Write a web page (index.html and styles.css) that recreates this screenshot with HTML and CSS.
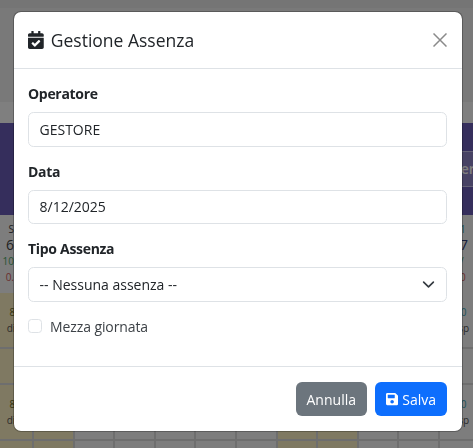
FILE: index.html
```html
<!DOCTYPE html>
<html lang="en">
<head>
    <meta charset="UTF-8">
    <meta name="viewport" content="width=device-width, initial-scale=1.0">
    <title>Gestione Assenza</title>
    <link rel="stylesheet" href="styles.css">
</head>
<body>
    <div class="page">
        <div class="top-bar"></div>
        <div class="top-strip"></div>
        <div class="band">
            <div class="band-tab">Inter</div>
        </div>
        <div class="calendar">
            <div class="cell summary"><span class="s-name">S</span><span class="s-num">6</span><span class="s-ok">10</span><span class="s-ko">0.</span></div>
            <div class="cell summary"></div><div class="cell summary"></div><div class="cell summary"></div>
            <div class="cell summary"></div><div class="cell summary"></div><div class="cell summary"></div>
            <div class="cell summary"></div><div class="cell summary"></div><div class="cell summary"></div>
            <div class="cell summary"></div>
            <div class="cell summary last"><span class="s-name teal">1</span><span class="s-num navy">7</span><span class="s-ok">/</span><span class="s-ko">0</span></div>

            <div class="cell day tan first"><span class="hours olive">8.0</span>disp</div><div class="cell day tan"></div><div class="cell day"></div><div class="cell day"></div>
            <div class="cell day"></div><div class="cell day"></div><div class="cell day"></div>
            <div class="cell day tan"></div><div class="cell day tan"></div><div class="cell day"></div>
            <div class="cell day"></div><div class="cell day final"><span class="hours teal">8.0</span>disp</div>

            <div class="cell gap tan"></div><div class="cell gap tan"></div><div class="cell gap"></div><div class="cell gap"></div>
            <div class="cell gap"></div><div class="cell gap"></div><div class="cell gap"></div>
            <div class="cell gap tan"></div><div class="cell gap tan"></div><div class="cell gap"></div>
            <div class="cell gap"></div><div class="cell gap"></div>

            <div class="cell day tan first"><span class="hours olive">8.0</span>disp</div><div class="cell day tan"></div><div class="cell day"></div><div class="cell day"></div>
            <div class="cell day"></div><div class="cell day"></div><div class="cell day"></div>
            <div class="cell day tan"></div><div class="cell day tan"></div><div class="cell day"></div>
            <div class="cell day"></div><div class="cell day final"><span class="hours teal">8.0</span>disp</div>

            <div class="cell gap tan"></div><div class="cell gap tan"></div><div class="cell gap"></div><div class="cell gap"></div>
            <div class="cell gap"></div><div class="cell gap"></div><div class="cell gap"></div>
            <div class="cell gap tan"></div><div class="cell gap tan"></div><div class="cell gap"></div>
            <div class="cell gap"></div><div class="cell gap"></div>
        </div>
    </div>

    <div class="backdrop">
        <div class="modal">
            <header class="modal-header">
                <h5 class="modal-title">
                    <svg class="title-icon" viewBox="0 0 448 512"><path fill="currentColor" d="M436 160H12c-6.627 0-12-5.373-12-12v-36c0-26.51 21.49-48 48-48h48V12c0-6.627 5.373-12 12-12h40c6.627 0 12 5.373 12 12v52h128V12c0-6.627 5.373-12 12-12h40c6.627 0 12 5.373 12 12v52h48c26.51 0 48 21.49 48 48v36c0 6.627-5.373 12-12 12zM12 192h424c6.627 0 12 5.373 12 12v260c0 26.51-21.49 48-48 48H48c-26.51 0-48-21.49-48-48V204c0-6.627 5.373-12 12-12zm333.296 95.947l-28.169-28.398c-4.667-4.705-12.265-4.736-16.97-.068L194.12 364.665l-45.98-46.352c-4.667-4.705-12.266-4.736-16.971-.068l-28.397 28.17c-4.705 4.667-4.736 12.265-.068 16.97l82.601 83.269c4.667 4.705 12.265 4.736 16.97.068l142.953-141.805c4.705-4.667 4.736-12.265.068-16.97z"/></svg>
                    Gestione Assenza
                </h5>
                <button class="btn-close" type="button" aria-label="Chiudi">
                    <svg viewBox="0 0 14 14"><path d="M.5.5l13 13M13.5.5l-13 13" stroke="currentColor" stroke-width="1.5" fill="none"/></svg>
                </button>
            </header>

            <div class="modal-body">
                <div class="form-group">
                    <label class="form-label">Operatore</label>
                    <input class="form-control" type="text" value="GESTORE">
                </div>
                <div class="form-group">
                    <label class="form-label">Data</label>
                    <input class="form-control" type="text" value="8/12/2025">
                </div>
                <div class="form-group">
                    <label class="form-label">Tipo Assenza</label>
                    <div class="select-wrap">
                        <select class="form-control">
                            <option>-- Nessuna assenza --</option>
                        </select>
                        <svg class="chevron" viewBox="0 0 16 16"><path d="M2 5l6 6 6-6" stroke="#343a40" stroke-width="2" stroke-linecap="round" stroke-linejoin="round" fill="none"/></svg>
                    </div>
                </div>
                <label class="form-check">
                    <input class="check-input" type="checkbox">
                    Mezza giornata
                </label>
            </div>

            <footer class="modal-footer">
                <button class="btn btn-secondary" type="button">Annulla</button>
                <button class="btn btn-primary" type="button">
                    <svg class="btn-icon" viewBox="0 0 448 512"><path fill="currentColor" d="M433.941 129.941l-83.882-83.882A48 48 0 0 0 316.118 32H48C21.49 32 0 53.49 0 80v352c0 26.51 21.49 48 48 48h352c26.51 0 48-21.49 48-48V163.882a48 48 0 0 0-14.059-33.941zM224 416c-35.346 0-64-28.654-64-64 0-35.346 28.654-64 64-64s64 28.654 64 64c0 35.346-28.654 64-64 64zm96-304.52V212c0 6.627-5.373 12-12 12H76c-6.627 0-12-5.373-12-12V108c0-6.627 5.373-12 12-12h228.52c3.183 0 6.235 1.264 8.485 3.515l3.48 3.48A11.996 11.996 0 0 1 320 111.48z"/></svg>
                    Salva
                </button>
            </footer>
        </div>
    </div>
</body>
</html>
```

FILE: styles.css
```css
:root {
    --text: #212529;
    --border: #dee2e6;
    --primary: #0d6efd;
    --secondary: #6c757d;
}

* {
    margin: 0;
    padding: 0;
    box-sizing: border-box;
}

html, body {
    height: 100%;
    overflow: hidden;
}

body {
    font-family: "Open Sans", "Noto Sans", Arial, sans-serif;
    font-size: 14px;
    line-height: 1.5;
    color: var(--text);
    background: #dcdcdc;
}

/* Page behind the dialog */
.page {
    height: 448px;
    overflow: hidden;
}

.top-bar {
    height: 8px;
    background: #eaeaea;
}

.top-strip {
    height: 115px;
    background: linear-gradient(#f2f2f2 0 94px, #ffffff 94px);
}

.band {
    display: flex;
    justify-content: flex-end;
    height: 92px;
    padding-top: 28px;
    background: #6a5cb8;
}

.band-tab {
    width: 33px;
    height: 36px;
    padding: 6px 0 0 2px;
    overflow: hidden;
    font-weight: 600;
    color: #ffffff;
    background: #8f84c8;
    border-top: 1px solid #c9c2ec;
    border-bottom: 1px solid #c9c2ec;
}

.calendar {
    display: grid;
    grid-template-columns: 32px repeat(10, 38.6px) 1fr;
    column-gap: 2px;
    background: #dcdcdc;
}

.cell {
    background: #fafafa;
    font-size: 10px;
    font-weight: 500;
    text-align: center;
    overflow: hidden;
}

.cell.tan {
    background: #fff3c4;
}

.summary {
    height: 78px;
    display: flex;
    flex-direction: column;
    align-items: flex-end;
    padding: 6px 18px 0 0;
    line-height: 16px;
}

.summary.last {
    align-items: flex-start;
    padding: 6px 0 0 20px;
}

.s-name { color: #444444; }
.s-num { color: #444444; font-size: 14px; }
.s-ok { color: #4ba866; }
.s-ko { color: #d45a5a; }
.teal { color: #3fa5b2; }
.navy { color: #2f3b78; }
.olive { color: #6a6a20; }

.day {
    height: 54px;
    padding-top: 12px;
    line-height: 15px;
    color: #555555;
}

.day.first {
    padding-left: 1px;
}

.day.final {
    padding-left: 6px;
}

.hours {
    display: block;
    height: 16px;
}

.gap {
    height: 34px;
    margin: 2px 0;
}

/* Dialog */
.backdrop {
    position: fixed;
    inset: 0;
    background: rgba(0, 0, 0, 0.5);
    padding: 11px 10px 0 13px;
}

.modal {
    background: #ffffff;
    border: 1px solid rgba(0, 0, 0, 0.25);
    border-radius: 8px;
    height: 421px;
    background-clip: padding-box;
}

.modal-header {
    display: flex;
    align-items: center;
    justify-content: space-between;
    height: 57px;
    padding: 0 15px 0 14px;
    border-bottom: 1px solid var(--border);
}

.modal-title {
    display: flex;
    align-items: center;
    gap: 7px;
    font-size: 17.5px;
    font-weight: 500;
    line-height: 1.5;
}

.title-icon {
    width: 15.75px;
    height: 18px;
}

.btn-close {
    width: 14px;
    height: 14px;
    border: none;
    background: none;
    color: #8a8a8a;
}

.btn-close svg {
    display: block;
    width: 14px;
    height: 14px;
}

.modal-body {
    height: 297px;
    padding: 14px 15px 0 14px;
}

.form-group {
    margin-bottom: 14px;
}

.form-label {
    display: block;
    height: 21px;
    margin-bottom: 8px;
    font-weight: 700;
    letter-spacing: -0.3px;
}

.form-control {
    display: block;
    width: 100%;
    height: 34.5px;
    padding: 0 10.5px;
    font: inherit;
    color: var(--text);
    background: #ffffff;
    border: 1px solid var(--border);
    border-radius: 5.5px;
    appearance: none;
}

.select-wrap {
    position: relative;
}

.chevron {
    position: absolute;
    top: 11px;
    right: 12.5px;
    width: 13px;
    height: 13px;
}

.form-check {
    display: flex;
    align-items: center;
    gap: 8px;
    margin-top: 1px;
    letter-spacing: -0.1px;
    color: #3d4247;
}

.check-input {
    width: 14px;
    height: 14px;
    background: #ffffff;
    border: 1px solid var(--border);
    border-radius: 3.5px;
    appearance: none;
}

.modal-footer {
    display: flex;
    justify-content: flex-end;
    gap: 8px;
    padding: 15px 15px 0;
    border-top: 1px solid var(--border);
}

.btn {
    display: flex;
    align-items: center;
    gap: 4px;
    height: 34px;
    padding: 0 11px;
    font: inherit;
    color: #ffffff;
    border: none;
    border-radius: 6px;
}

.btn-secondary {
    background: var(--secondary);
}

.btn-primary {
    background: var(--primary);
}

.btn-icon {
    width: 12.25px;
    height: 14px;
}
```
